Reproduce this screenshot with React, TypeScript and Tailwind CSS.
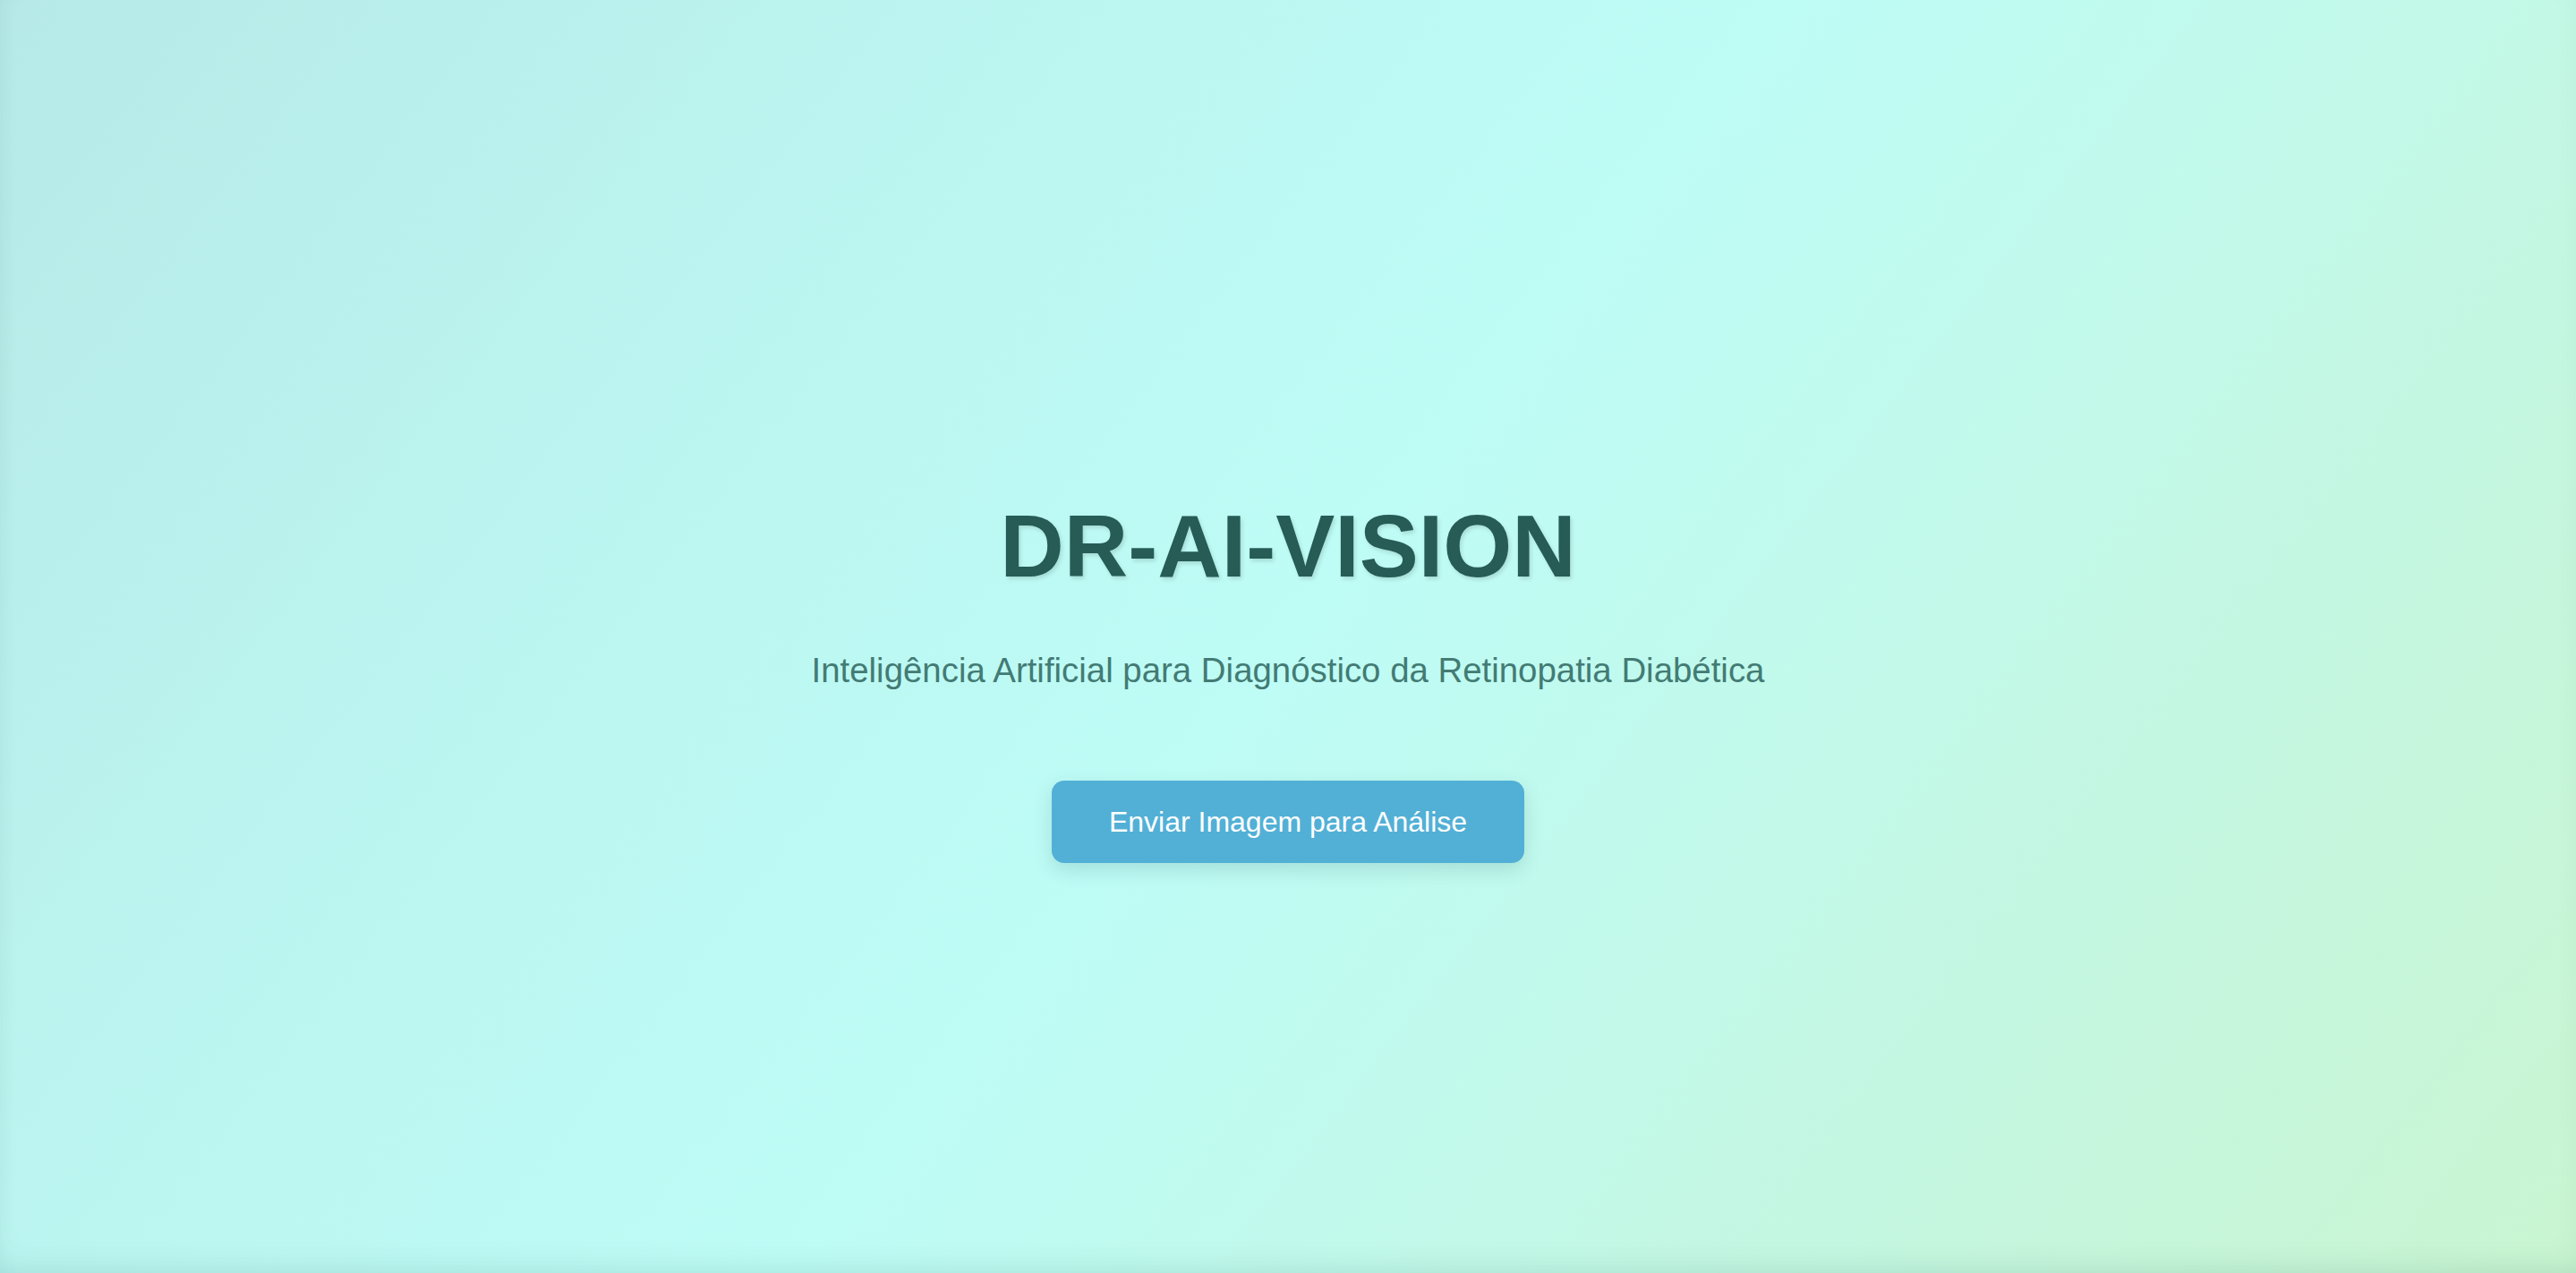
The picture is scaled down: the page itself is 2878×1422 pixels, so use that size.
import React from "react";

const App = () => {
  return (
    <div className="relative min-h-screen w-full bg-[linear-gradient(128deg,#b6e9e7_0%,#bcf6f1_30%,#befcf6_50%,#c3f8e6_72%,#c9f5d1_100%)] font-['Liberation_Sans',Arial,sans-serif]">
      <div className="flex min-h-screen flex-col items-center justify-center pt-[94px] text-center">
        <h1 className="mb-[60px] text-[99px] font-bold leading-[115px] text-[#265c55] [text-shadow:2px_3px_4px_rgba(0,0,0,0.12)]">
          DR-AI-VISION
        </h1>
        <p className="mb-[101px] text-[38.4px] leading-[44px] text-[#437b74]">
          Inteligência Artificial para Diagnóstico da Retinopatia Diabética
        </p>
        <button className="rounded-[14px] bg-[#52b0d6] px-[64px] py-[22px] text-[32px] leading-[48px] text-white shadow-[0_8px_22px_rgba(0,60,70,0.14)]">
          Enviar Imagem para Análise
        </button>
      </div>
      <div className="pointer-events-none absolute inset-0 shadow-[inset_0_-18px_40px_-22px_rgba(0,70,60,0.18),inset_14px_0_36px_-30px_rgba(0,70,60,0.08)]" />
    </div>
  );
};

export default App;
